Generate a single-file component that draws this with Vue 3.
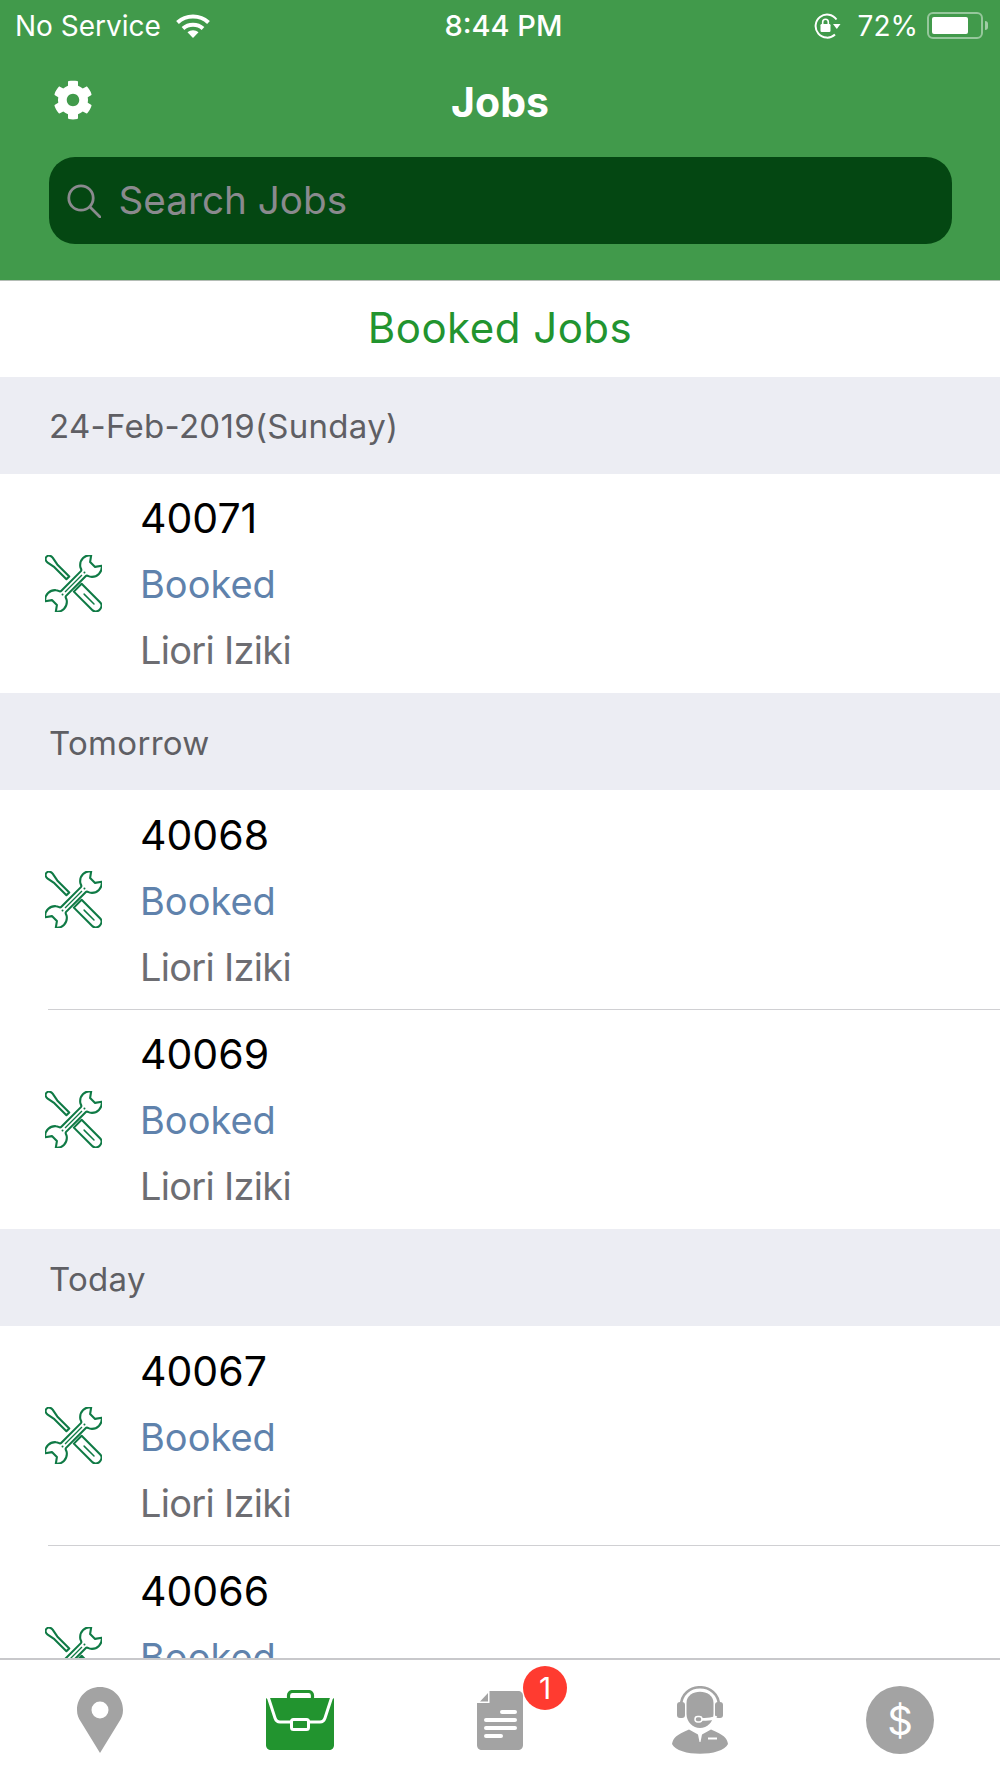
<script setup>
const sections = [
  { title: '24-Feb-2019(Sunday)', jobs: ['40071'] },
  { title: 'Tomorrow', jobs: ['40068', '40069'] },
  { title: 'Today', jobs: ['40067', '40066'] },
]
</script>

<template>
  <div class="screen">
    <header class="head">
      <div class="status">
        <div class="st-left">
          <span>No Service</span>
          <svg class="wifi" viewBox="0 0 34 24" fill="none" stroke="#fff" stroke-width="4">
            <path d="M1.5 8.5C10 .5 24 .5 32.5 8.5" />
            <path d="M7 14.5C12.500 9.500 21.500 9.500 27 14.500" />
            <path d="M17 24l-5.500-5.700C14.500 15.500 19.500 15.500 22.500 18.300Z" fill="#fff" stroke="none" />
          </svg>
        </div>
        <div class="st-time">8:44 PM</div>
        <div class="st-right">
          <svg class="rot" viewBox="0 0 28 26">
            <path d="M23.500 6.500A11.500 11.500 0 1 0 22 21.500" fill="none" stroke="#fff" stroke-width="2" />
            <path d="M20 11h7.500l-3.700 5z" fill="#fff" />
            <rect x="7.500" y="11" width="10" height="8" rx="1.200" fill="#fff" />
            <path d="M9.700 11V9a2.800 2.800 0 0 1 5.600 0v2" fill="none" stroke="#fff" stroke-width="1.600" />
          </svg>
          <span class="pct">72%</span>
          <div class="batt"><div class="batt-fill"></div></div>
          <div class="batt-tip"></div>
        </div>
      </div>
      <div class="nav">
        <div class="nav-side">
          <svg class="gear" viewBox="0 0 512 512" fill="#fff">
            <path d="M487.400 315.700l-42.600-24.600c4.300-23.200 4.300-47 0-70.200l42.600-24.600c4.900-2.800 7.100-8.600 5.500-14-11.100-35.600-30-67.800-54.700-94.600-3.800-4.100-10-5.100-14.800-2.300L380.800 110c-17.900-15.400-38.500-27.300-60.800-35.100V25.800c0-5.600-3.900-10.500-9.400-11.700-36.700-8.200-74.300-7.800-109.200 0-5.500 1.200-9.400 6.100-9.400 11.700V75c-22.200 7.900-42.800 19.800-60.800 35.100L88.700 85.500c-4.900-2.800-11-1.900-14.800 2.300-24.700 26.700-43.600 58.900-54.700 94.600-1.700 5.400.6 11.200 5.500 14L67.300 221c-4.300 23.200-4.300 47 0 70.200l-42.600 24.600c-4.900 2.800-7.100 8.600-5.500 14 11.100 35.600 30 67.800 54.700 94.600 3.800 4.100 10 5.100 14.800 2.300l42.600-24.600c17.900 15.400 38.500 27.300 60.800 35.100v49.200c0 5.600 3.900 10.500 9.400 11.700 36.700 8.200 74.300 7.800 109.200 0 5.500-1.200 9.400-6.100 9.400-11.700v-49.200c22.200-7.900 42.800-19.800 60.800-35.100l42.600 24.600c4.900 2.800 11 1.900 14.800-2.300 24.700-26.700 43.600-58.900 54.700-94.600 1.500-5.500-.7-11.300-5.600-14.100zM256 336c-44.100 0-80-35.900-80-80s35.900-80 80-80 80 35.900 80 80-35.900 80-80 80z" />
          </svg>
        </div>
        <div class="title">Jobs</div>
        <div class="nav-side"></div>
      </div>
      <div class="search">
        <svg class="mag" viewBox="0 0 34 34" fill="none" stroke="#8a8a8e" stroke-width="2.800">
          <circle cx="14" cy="14" r="12.200" />
          <path d="M23 23l10 10" stroke-linecap="round" />
        </svg>
        <span class="ph">Search Jobs</span>
      </div>
    </header>

    <div class="band"><span>Booked Jobs</span></div>

    <div class="list">
      <section v-for="s in sections" :key="s.title">
        <div class="sec-head">{{ s.title }}</div>
        <div v-for="j in s.jobs" :key="j" class="row">
          <svg class="tools" viewBox="0 0 57 57" fill="#fff" stroke="#0f7a45" stroke-width="2.100" stroke-linejoin="round">
            <g transform="translate(28.500 28.500) rotate(45)">
              <path d="M-38 0C-38 -2.500 -36 -3.800 -33 -3.500L-25 -2L-8 -2L-8 2L-25 2L-33 3.500C-36 3.800 -38 2.500 -38 0Z" />
              <path d="M6 -5.500L32 -5.500C35 -5.500 37 -3 37 0C37 3 35 5.500 32 5.500L6 5.500Z" />
              <path d="M15 0L29 0" stroke-width="1.500" stroke-linecap="round" />
            </g>
            <g transform="translate(28.500 28.500) rotate(-45)">
              <path d="M-14 -3.500L14 -3.500C16 -3.500 15.500 -6 17 -7.500A10 10 0 0 1 32.500 -7.500L27 -3.500L27 3.500L32.500 7.500A10 10 0 0 1 17 7.500C15.500 6 16 3.500 14 3.500L-14 3.500C-16 3.500 -15.500 6 -17 7.500A10 10 0 0 1 -32.500 7.500L-27 3.500L-27 -3.500L-32.500 -7.500A10 10 0 0 1 -17 -7.500C-15.500 -6 -16 -3.500 -14 -3.500Z" />
              <path d="M-12 0L12 0" stroke-width="1.300" />
              <circle cx="-15.500" cy="0" r="1" fill="#0f7a45" stroke="none" />
              <circle cx="15.500" cy="0" r="1" fill="#0f7a45" stroke="none" />
            </g>
          </svg>
          <div class="info">
            <div class="num">{{ j }}</div>
            <div class="state">Booked</div>
            <div class="name">Liori Iziki</div>
          </div>
        </div>
      </section>
    </div>

    <nav class="tabs">
      <div class="tab">
        <svg class="t-pin" viewBox="0 0 46 66">
          <path fill-rule="evenodd" fill="#a3a3a3" d="M23 0C10 0 0 10 0 23C0 28 1.500 31.500 4 35L23 66L42 35C44.500 31.500 46 28 46 23C46 10 36 0 23 0ZM23 14.500A8.500 8.500 0 1 1 23 31.500A8.500 8.500 0 1 1 23 14.500Z" />
        </svg>
      </div>
      <div class="tab">
        <svg class="t-case" viewBox="0 0 68 60">
          <rect x="22.500" y="1.500" width="24" height="10" rx="4" fill="none" stroke="#22942f" stroke-width="3.200" />
          <path d="M0 8H68V55C68 58 66 60 63 60H5C2 60 0 58 0 55Z" fill="#22942f" />
          <path d="M1 7L2.500 8L9 28C10 31 11 32 14 32H54C57 32 58 31 59 28L65.500 8L67 7" fill="none" stroke="#fff" stroke-width="3" />
          <rect x="25.500" y="29.500" width="17" height="10" rx="2" fill="#22942f" stroke="#fff" stroke-width="3" />
        </svg>
      </div>
      <div class="tab">
        <div class="doc-wrap">
          <svg class="t-doc" viewBox="0 0 46 59">
            <path fill="#a3a3a3" d="M0 12H12.500V0H41C44 0 46 2 46 5V54C46 57 44 59 41 59H5C2 59 0 57 0 54Z" />
            <path fill="#a3a3a3" d="M3 10.500L11 2V10.500Z" />
            <path d="M25 21H38M9 29H38M9 37H38M9 45H24" stroke="#fff" stroke-width="4" stroke-linecap="round" />
          </svg>
          <span class="badge">1</span>
        </div>
      </div>
      <div class="tab">
        <svg class="t-agent" viewBox="0 0 56 68">
          <path d="M9 20C9 -5 47 -5 47 20" fill="none" stroke="#a3a3a3" stroke-width="2.600" />
          <rect x="5" y="16" width="8" height="16" rx="3" fill="#a3a3a3" />
          <rect x="43" y="16" width="8" height="16" rx="3" fill="#a3a3a3" />
          <path d="M14.500 17C14.500 2 41.500 2 41.500 17V28C41.500 36 35 42 28 42C21 42 14.500 36 14.500 28Z" fill="#a3a3a3" />
          <path d="M44 30C43 33 38 33.500 25 33.500" fill="none" stroke="#fff" stroke-width="2.600" />
          <rect x="23" y="30.500" width="7" height="5.500" rx="2.700" fill="#a3a3a3" stroke="#fff" stroke-width="1.500" />
          <path d="M0 58C1 52 4 49 17 43.500L26 48.500L27.500 56H28.500L30 48.500L39 43.500C52 49 55 52 56 58C50 71 6 71 0 58Z" fill="#a3a3a3" />
          <path d="M36 52.500H45" stroke="#fff" stroke-width="2" />
        </svg>
      </div>
      <div class="tab">
        <div class="t-dollar">$</div>
      </div>
    </nav>
  </div>
</template>

<style scoped>
.screen {
  width: 1000px;
  height: 1778px;
  display: flex;
  flex-direction: column;
  overflow: hidden;
  background: #fff;
  font-family: Inter, "Liberation Sans", sans-serif;
}
.head {
  height: 281px;
  box-sizing: border-box;
  flex: none;
  background: #419a4b;
  border-bottom: 1px solid #b4bdb5;
  color: #fff;
}
.status {
  height: 51px;
  display: grid;
  grid-template-columns: 1fr auto 1fr;
  align-items: center;
  font-size: 28px;
  padding: 0 12px 0 15px;
}
.st-left, .st-right { display: flex; align-items: center; }
.st-left { gap: 15px; }
.st-right { justify-content: flex-end; }
.st-time { font-size: 29px; font-weight: 500; margin-left: 4px; }
.wifi { width: 34px; height: 24px; }
.rot { width: 28px; height: 26px; }
.pct { margin-left: 17px; }
.batt {
  width: 56px;
  height: 27px;
  box-sizing: border-box;
  margin-left: 9px;
  border: 2px solid rgba(255, 255, 255, 0.45);
  border-radius: 6px;
  padding: 3px;
}
.batt-fill { width: 36px; height: 100%; background: #fff; border-radius: 2px; }
.batt-tip {
  width: 3px;
  height: 9px;
  margin-left: 2px;
  background: rgba(255, 255, 255, 0.5);
  border-radius: 0 3px 3px 0;
}
.nav {
  height: 102px;
  margin-bottom: 4px;
  display: grid;
  grid-template-columns: 1fr auto 1fr;
  align-items: center;
}
.nav-side { display: flex; padding-left: 53px; }
.gear { width: 40px; height: 40px; margin-top: -5px; }
.title { font-size: 41px; font-weight: 700; }
.search {
  margin: 0 48.500px;
  height: 87px;
  background: #044712;
  border-radius: 26px;
  display: flex;
  align-items: center;
  padding-left: 18px;
  gap: 18px;
  color: #8a8a8e;
  font-size: 38.700px;
}
.ph { margin-top: -2px; }
.mag { width: 34px; height: 34px; }
.band {
  height: 96px;
  flex: none;
  display: flex;
  align-items: center;
  justify-content: center;
  color: #22942f;
  font-size: 42px;
  letter-spacing: 0.5px;
  padding-bottom: 4px;
  box-sizing: border-box;
}
.list { flex: 1; min-height: 0; overflow: hidden; }
.sec-head {
  height: 96.500px;
  box-sizing: border-box;
  display: flex;
  align-items: center;
  padding: 2px 0 0 49px;
  background: #ecedf3;
  color: #5f5f64;
  font-size: 33px;
  letter-spacing: 0.3px;
}
.row {
  height: 219.800px;
  box-sizing: border-box;
  display: flex;
  align-items: center;
  position: relative;
}
.row + .row::before {
  content: "";
  position: absolute;
  left: 48px;
  right: 0;
  top: -1px;
  height: 1px;
  background: #d0d0d3;
}
.tools { width: 57px; height: 57px; margin-left: 45px; flex: none; }
.info { margin-left: 38px; padding-top: 2px; }
.num, .state, .name { height: 66px; line-height: 66px; }
.num { color: #000; font-size: 41px; }
.state { color: #5f82ac; font-size: 38px; }
.name { color: #6d6d72; font-size: 38px; letter-spacing: -0.7px; }
.tabs {
  height: 120px;
  flex: none;
  box-sizing: border-box;
  border-top: 2px solid #c8c8cb;
  padding-top: 2px;
  background: #fff;
  display: grid;
  grid-template-columns: repeat(5, 1fr);
  align-items: center;
  justify-items: center;
}
.tab { display: flex; }
.t-pin { width: 46px; height: 66px; }
.t-case { width: 68px; height: 60px; }
.t-agent { width: 56px; height: 68px; }
.doc-wrap { position: relative; display: flex; }
.t-doc { width: 46px; height: 59px; }
.badge {
  position: absolute;
  left: 46px;
  top: -25px;
  width: 44px;
  height: 44px;
  border-radius: 50%;
  background: #ff3b30;
  color: #fff;
  font-size: 30px;
  display: flex;
  align-items: center;
  justify-content: center;
}
.t-dollar {
  width: 68px;
  height: 68px;
  border-radius: 50%;
  background: #a3a3a3;
  color: #fff;
  font-size: 40px;
  display: flex;
  align-items: center;
  justify-content: center;
}
</style>
